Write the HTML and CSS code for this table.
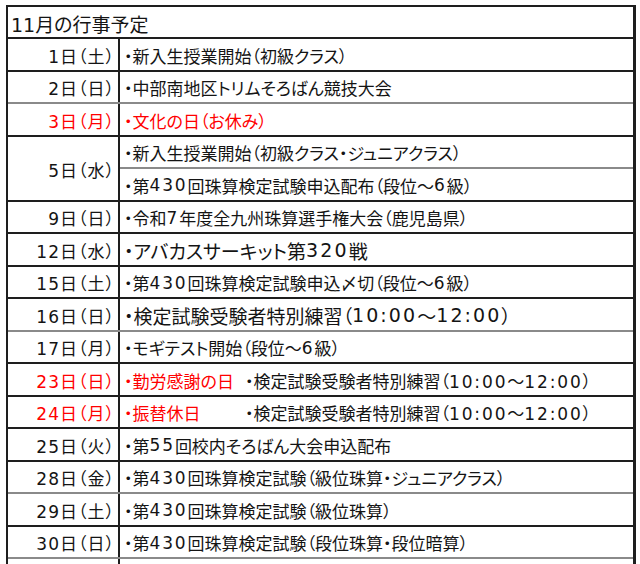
FILE: index.html
```html
<!DOCTYPE html>
<html lang="ja">
<head>
<meta charset="utf-8">
<title>11月の行事予定</title>
<link rel="stylesheet" href="styles.css">
</head>
<body>
<div class="sheet">
  <div class="title">11月の行事予定</div>
  <div class="row"><div class="date">1日（土）</div><div class="ev">・新入生授業開始（初級クラス）</div></div>
  <div class="row thin"><div class="date">2日（日）</div><div class="ev">・中部南地区トリムそろばん競技大会</div></div>
  <div class="row red"><div class="date">3日（月）</div><div class="ev">・文化の日（お休み）</div></div>
  <div class="row double">
    <div class="date">5日（水）</div>
    <div class="evs">
      <div class="ev sub">・新入生授業開始（初級クラス・ジュニアクラス）</div>
      <div class="ev">・第<span class="n">430</span>回珠算検定試験申込配布（段位～<span class="n">6</span>級）</div>
    </div>
  </div>
  <div class="row"><div class="date">9日（日）</div><div class="ev">・令和<span class="n">7</span>年度全九州珠算選手権大会（鹿児島県）</div></div>
  <div class="row"><div class="date">12日（水）</div><div class="ev big">・アバカスサーキット第<span class="n">320</span>戦</div></div>
  <div class="row"><div class="date">15日（土）</div><div class="ev">・第<span class="n">430</span>回珠算検定試験申込〆切（段位～<span class="n">6</span>級）</div></div>
  <div class="row thin"><div class="date">16日（日）</div><div class="ev big">・検定試験受験者特別練習（<span class="n">10:00</span>～<span class="n">12:00</span>）</div></div>
  <div class="row"><div class="date">17日（月）</div><div class="ev">・モギテスト開始（段位～<span class="n">6</span>級）</div></div>
  <div class="row"><div class="date red-text">23日（日）</div><div class="ev"><span class="holiday">・勤労感謝の日</span><span>・検定試験受験者特別練習（<span class="n">10:00</span>～<span class="n">12:00</span>）</span></div></div>
  <div class="row"><div class="date red-text">24日（月）</div><div class="ev"><span class="holiday">・振替休日</span><span>・検定試験受験者特別練習（<span class="n">10:00</span>～<span class="n">12:00</span>）</span></div></div>
  <div class="row"><div class="date">25日（火）</div><div class="ev">・第<span class="n">55</span>回校内そろばん大会申込配布</div></div>
  <div class="row thin"><div class="date">28日（金）</div><div class="ev">・第<span class="n">430</span>回珠算検定試験（級位珠算・ジュニアクラス）</div></div>
  <div class="row"><div class="date">29日（土）</div><div class="ev">・第<span class="n">430</span>回珠算検定試験（級位珠算）</div></div>
  <div class="row thin"><div class="date">30日（日）</div><div class="ev">・第<span class="n">430</span>回珠算検定試験（段位珠算・段位暗算）</div></div>
  <div class="row"><div class="date"></div><div class="ev"></div></div>
</div>
</body>
</html>
```

FILE: styles.css
```css
html, body {
  margin: 0;
  padding: 0;
  background: #ffffff;
}

body {
  height: 564px;
  overflow: hidden;
  font-family: "DejaVu Sans", "Noto Sans CJK JP", sans-serif;
  color: #141414;
  font-feature-settings: "palt" 1;
}

.sheet {
  margin: 5px 0 0 6px;
  width: 630px;
  box-sizing: border-box;
  border-style: solid;
  border-color: #1e1e1e;
  border-width: 2px 3px 0 2px;
}

.title {
  height: 32px;
  box-sizing: border-box;
  border-bottom: 2px solid #1e1e1e;
  display: flex;
  align-items: center;
  padding: 2px 0 0 3px;
  font-size: 19px;
}

.row {
  display: grid;
  grid-template-columns: 110px 1fr;
  height: 32.5px;
  box-sizing: border-box;
  border-bottom: 2px solid #1e1e1e;
}

.row.thin {
  border-bottom-color: #8a8a8a;
}

.row.double {
  height: 65px;
}

.date {
  display: flex;
  align-items: center;
  justify-content: flex-end;
  padding: 2px 3px 0 0;
  font-size: 17px;
  letter-spacing: 1px;
  white-space: nowrap;
}

.evs {
  display: flex;
  flex-direction: column;
  border-left: 2px solid #1e1e1e;
}

.evs .ev {
  flex: 1;
  border-left: 0;
}

.ev {
  border-left: 2px solid #1e1e1e;
  display: flex;
  align-items: center;
  padding: 2px 0 0 4px;
  font-size: 17px;
  white-space: nowrap;
}

.ev.sub {
  border-bottom: 2px solid #8a8a8a;
}

.ev.big {
  font-size: 19px;
}

.n {
  letter-spacing: 0.11em;
}

.row.red .date,
.row.red .ev,
.red-text,
.holiday {
  color: #ff0000;
}

.holiday {
  display: inline-block;
  width: 121px;
}
```
